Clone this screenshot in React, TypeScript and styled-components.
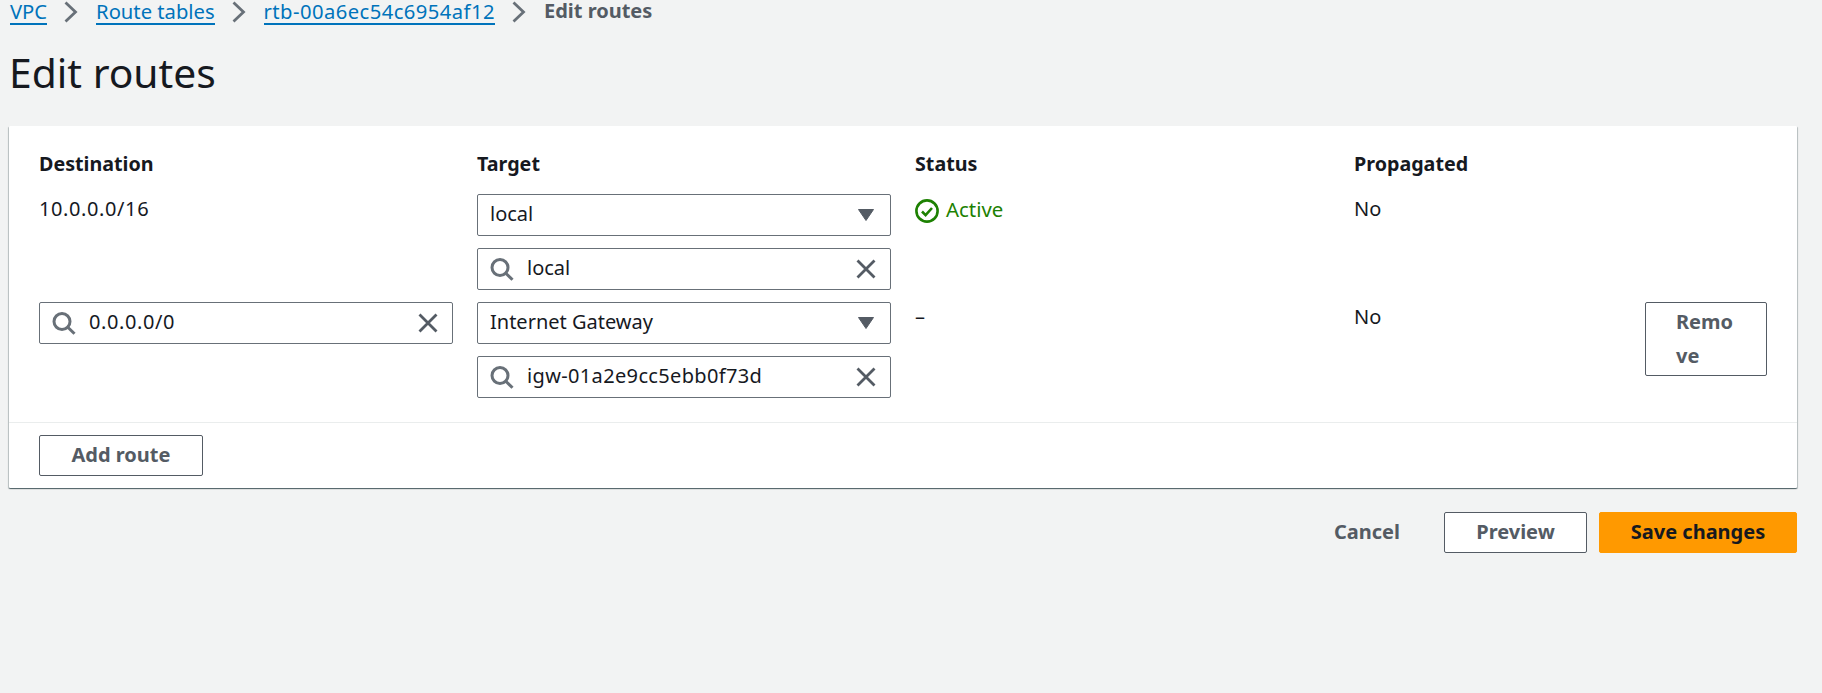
import React from "react";
import styled, { createGlobalStyle } from "styled-components";

const GlobalStyle = createGlobalStyle`
  html, body {
    margin: 0;
    padding: 0;
    background: #f2f3f3;
    color: #16191f;
    font-family: "Noto Sans", "Open Sans", sans-serif;
    font-size: 20px;
  }
`;

const Page = styled.div`
  min-height: 693px;
  box-sizing: border-box;
  padding: 0 25px 0 9px;
`;

const Breadcrumbs = styled.nav`
  display: flex;
  align-items: center;
  height: 24px;
  padding-left: 1px;
`;

const Crumb = styled.a<{ $tracking?: number }>`
  color: #0073bb;
  font-size: 20.2px;
  letter-spacing: ${(p) => p.$tracking ?? 0}px;
  line-height: 22px;
  height: 23px;
  border-bottom: 2px solid #0073bb;
`;

const CurrentCrumb = styled.span`
  color: #545b64;
  font-size: 20px;
  font-weight: 700;
  line-height: 22px;
  height: 25px;
`;

const CrumbArrow = styled.svg`
  width: 14px;
  height: 22px;
  margin: 0 18px 0 17px;
  flex: none;
`;

const Title = styled.h1`
  margin: 26px 0 31px 0;
  font-size: 40.8px;
  font-weight: 400;
  line-height: 45px;
`;

const Panel = styled.section`
  background: #fff;
  border-radius: 1px;
  box-shadow: 0 1px 1px 0 rgba(0, 28, 36, 0.5), 1px 1px 1px 0 rgba(0, 28, 36, 0.2),
    -1px 1px 1px 0 rgba(0, 28, 36, 0.2);
`;

const RouteGrid = styled.div`
  display: grid;
  grid-template-columns: 414px 414px 415px 1fr 122px;
  column-gap: 24px;
  row-gap: 12px;
  padding: 23px 30px 24px 30px;
`;

const HeadCell = styled.div`
  font-size: 19.7px;
  font-weight: 700;
  line-height: 30px;
  margin-bottom: 3px;
`;

const TextCell = styled.div<{ $tracking?: number }>`
  letter-spacing: ${(p) => p.$tracking ?? 0}px;
  line-height: 24px;
  padding-top: 3px;
`;

const Stack = styled.div`
  display: flex;
  flex-direction: column;
  gap: 12px;
`;

const Field = styled.div`
  display: flex;
  align-items: center;
  box-sizing: border-box;
  height: 42px;
  padding: 0 12px 0 12px;
  background: #fff;
  border: 1px solid #687078;
  border-radius: 2px;
`;

const FieldText = styled.span<{ $indented?: boolean; $tracking?: number }>`
  flex: 1;
  letter-spacing: ${(p) => p.$tracking ?? 0}px;
  line-height: 24px;
  padding-bottom: 2px;
  margin-left: ${(p) => (p.$indented ? "13px" : "0")};
`;

const FieldIcon = styled.svg`
  width: 24px;
  height: 24px;
  flex: none;
`;

const StatusOk = styled.div`
  display: flex;
  align-items: flex-start;
  align-self: start;
  gap: 7px;
  color: #1d8102;
  font-size: 20.4px;
  line-height: 24px;
  padding-top: 5px;
`;

const StatusText = styled.span`
  margin-top: -2px;
`;

const Button = styled.button<{ $primary?: boolean }>`
  box-sizing: border-box;
  height: 41px;
  padding: 0 20px 2px;
  background: ${(p) => (p.$primary ? "#ff9900" : "#fff")};
  border: 1px solid ${(p) => (p.$primary ? "#ff9900" : "#545b64")};
  border-radius: 2px;
  color: ${(p) => (p.$primary ? "#16191f" : "#545b64")};
  font: 700 20px "Noto Sans", "Open Sans", sans-serif;
  white-space: nowrap;
`;

const RemoveButton = styled(Button)`
  height: 74px;
  width: 122px;
  padding: 2px 30px 3px;
  white-space: normal;
  word-break: break-all;
  text-align: left;
  line-height: 33.5px;
`;

const PanelFooter = styled.div`
  border-top: 1px solid #eaeded;
  padding: 12px 30px;
`;

const AddButton = styled(Button)`
  width: 164px;
`;

const Actions = styled.div`
  display: flex;
  justify-content: flex-end;
  align-items: center;
  margin-top: 24px;
`;

const TextButton = styled.span`
  color: #545b64;
  font-weight: 700;
  margin-right: 44px;
  padding-bottom: 2px;
`;

const PreviewButton = styled(Button)`
  width: 143px;
  margin-right: 12px;
`;

const SaveButton = styled(Button)`
  width: 198px;
`;

const Chevron = () => (
  <CrumbArrow viewBox="0 0 14 22">
    <path d="M1.5 1.5l10 9.5-10 9.5" fill="none" stroke="#687078" strokeWidth="2.8" />
  </CrumbArrow>
);

const SearchIcon = () => (
  <FieldIcon viewBox="0 0 24 24">
    <circle cx="10" cy="10.5" r="8" fill="none" stroke="#687078" strokeWidth="3" />
    <path d="M15.8 16.2L22.5 22.8" fill="none" stroke="#687078" strokeWidth="3" />
  </FieldIcon>
);

const ClearIcon = () => (
  <FieldIcon viewBox="0 0 24 24">
    <path d="M3.5 3.5l17 17M20.5 3.5l-17 17" fill="none" stroke="#545b64" strokeWidth="2.8" />
  </FieldIcon>
);

const CaretIcon = () => (
  <FieldIcon viewBox="0 0 24 24">
    <path d="M4.5 6.5h15l-7.5 11z" fill="#545b64" stroke="#545b64" strokeWidth="1" strokeLinejoin="round" />
  </FieldIcon>
);

const CheckIcon = () => (
  <FieldIcon viewBox="0 0 24 24">
    <circle cx="12" cy="12" r="10.6" fill="none" stroke="#1d8102" strokeWidth="2.6" />
    <path d="M7 12.5l3.6 3.6L17 9" fill="none" stroke="#1d8102" strokeWidth="2.6" />
  </FieldIcon>
);

const SelectField: React.FC<{ value: string }> = ({ value }) => (
  <Field>
    <FieldText>{value}</FieldText>
    <CaretIcon />
  </Field>
);

const SearchField: React.FC<{ value: string; tracking?: number }> = ({ value, tracking }) => (
  <Field>
    <SearchIcon />
    <FieldText $indented $tracking={tracking}>
      {value}
    </FieldText>
    <ClearIcon />
  </Field>
);

export default function App() {
  return (
    <Page>
      <GlobalStyle />
      <Breadcrumbs>
        <Crumb>VPC</Crumb>
        <Chevron />
        <Crumb>Route tables</Crumb>
        <Chevron />
        <Crumb $tracking={0.45}>rtb-00a6ec54c6954af12</Crumb>
        <Chevron />
        <CurrentCrumb>Edit routes</CurrentCrumb>
      </Breadcrumbs>
      <Title>Edit routes</Title>
      <Panel>
        <RouteGrid>
          <HeadCell>Destination</HeadCell>
          <HeadCell>Target</HeadCell>
          <HeadCell>Status</HeadCell>
          <HeadCell>Propagated</HeadCell>
          <div />

          <TextCell $tracking={0.6}>10.0.0.0/16</TextCell>
          <Stack>
            <SelectField value="local" />
            <SearchField value="local" />
          </Stack>
          <StatusOk>
            <CheckIcon />
            <StatusText>Active</StatusText>
          </StatusOk>
          <TextCell>No</TextCell>
          <div />

          <div>
            <SearchField value="0.0.0.0/0" tracking={0.6} />
          </div>
          <Stack>
            <SelectField value="Internet Gateway" />
            <SearchField value="igw-01a2e9cc5ebb0f73d" tracking={0.35} />
          </Stack>
          <TextCell>–</TextCell>
          <TextCell>No</TextCell>
          <div>
            <RemoveButton>Remove</RemoveButton>
          </div>
        </RouteGrid>
        <PanelFooter>
          <AddButton>Add route</AddButton>
        </PanelFooter>
      </Panel>
      <Actions>
        <TextButton>Cancel</TextButton>
        <PreviewButton>Preview</PreviewButton>
        <SaveButton $primary>Save changes</SaveButton>
      </Actions>
    </Page>
  );
}
